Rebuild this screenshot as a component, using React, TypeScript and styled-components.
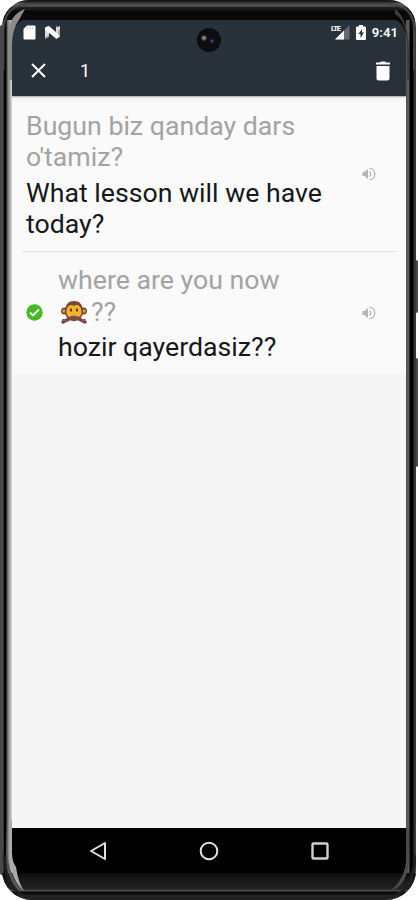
import React from 'react'
import styled, { createGlobalStyle } from 'styled-components'

const GlobalStyle = createGlobalStyle`
  body {
    margin: 0;
    background-color: white;
  }
`

const Stage = styled.div`
  position: relative;
  width: 418px;
  height: 900px;
  overflow: hidden;
  background-color: white;
  font-family: Roboto, 'Liberation Sans', sans-serif;
`

const SideKey = styled.div<{ $top: number; $height: number; $left?: boolean }>`
  position: absolute;
  top: ${({ $top }) => $top}px;
  height: ${({ $height }) => $height}px;
  ${({ $left }) => ($left ? 'left: 0;' : 'right: 0;')}
  width: 6px;
  border-radius: 2px;
  background-color: #484848;
`

const Body = styled.div`
  position: relative;
  box-sizing: border-box;
  display: flex;
  flex-direction: column;
  height: 900px;
  margin: 0 2px;
  border-radius: 27px 27px 30px 30px;
  overflow: hidden;
  background: linear-gradient(
    to right,
    #555 0,
    #333 1.5px,
    #000 2.5px,
    #050505 4px,
    #555 5px,
    #777 6px,
    #999 7px,
    #aaa 8px,
    #c4c4c4 9px,
    #ddd 10px,
    #555 11px,
    #555 404px,
    #5c5c5c 407px,
    #000 408px,
    #000 411px,
    #333 412px,
    #3c3c3c 414px
  );
`
const TopRim = styled.div`
  flex: none;
  height: 20px;
  background: linear-gradient(#111 0, #222 2px, #666 4px, #555 6px, #111 8px, #222 9px, #080808 11px, #0b0b0b 20px);
`
const BottomRim = styled.div`
  flex: none;
  height: 27px;
  background: linear-gradient(#0c0c0c 0, #191919 8px, #222 16px, #555 18px, #000 19px, #111 21px, #333 24px, #222 27px);
`
const Glare = styled.svg`
  position: absolute;
  left: 0;
  top: 0;
  pointer-events: none;
`

const Screen = styled.div`
  flex: 1;
  display: flex;
  flex-direction: column;
  margin: 0 10px;
  background-color: #f5f5f5;
`

const StatusBar = styled.div`
  display: flex;
  align-items: center;
  height: 25px;
  padding: 0 8px 0 11px;
  background-color: #28323b;
  color: white;
`
const StatusGroup = styled.div`
  display: flex;
  align-items: center;
  gap: 9px;
  flex: 1;
`
const StatusGap = styled.div`
  width: 6px;
`
const Clock = styled.div`
  margin-left: 6px;
  font-size: 13.2px;
  font-weight: 600;
  line-height: 15px;
`
const Camera = styled.div`
  position: absolute;
  left: 195px;
  top: 28px;
  width: 24px;
  height: 24px;
  border-radius: 50%;
  background: radial-gradient(circle at 7px 10px, #bbb 0, #666 1.5px, transparent 3.5px),
    radial-gradient(circle at 15px 13px, #55679c 0, #20264b 1.5px, transparent 3px), #0b0d0e;
`

const ActionBar = styled.div`
  display: flex;
  align-items: center;
  height: 51px;
  padding: 0 15px 0 18px;
  background-color: #28303a;
  color: white;
`
const Count = styled.div`
  flex: 1;
  margin-left: 33px;
  font-size: 18px;
`

const List = styled.div`
  display: flex;
  flex-direction: column;
  height: 278px;
  background: linear-gradient(#98999b 0, #d8d8d8 1px, #f2f2f2 2px, #fafafa 5px);
`
const Entry = styled.div<{ $height: number }>`
  display: flex;
  align-items: center;
  box-sizing: border-box;
  height: ${({ $height }) => $height}px;
  padding: 0 30px 0 14px;
`
const Check = styled.div`
  display: flex;
  width: 32px;
`
const Phrases = styled.div`
  flex: 1;
  padding-top: 4px;
  white-space: nowrap;
`
const Phrase = styled.div<{ $muted?: boolean }>`
  margin-bottom: ${({ $muted }) => ($muted ? 4 : 0)}px;
  font-size: 26.7px;
  line-height: 31.5px;
  color: ${({ $muted }) => ($muted ? '#a3a3a3' : '#16181b')};
`
const Line = styled.div`
  display: flex;
  align-items: center;
  height: 31.5px;
`
const Divider = styled.div`
  height: 1px;
  margin: 0 10px;
  background-color: #e0e0e0;
`

const NavBar = styled.div`
  display: flex;
  align-items: center;
  justify-content: space-between;
  height: 45px;
  margin-top: auto;
  padding: 0 77px;
  background-color: black;
`

const SdCard = () => (
  <svg width="13" height="15" viewBox="0 0 13 15">
    <path d="M4 0.5h7.5a1 1 0 0 1 1 1v12a1 1 0 0 1-1 1h-10a1 1 0 0 1-1-1V4z" fill="#fff" />
    <path d="M4.5 2v2M7 2v2M9.5 2v2" stroke="#ccc" />
  </svg>
)

const Nougat = () => (
  <svg width="15" height="13" viewBox="0 0 15 13">
    <path d="M0 3l4 3v5l-4 2zM11 0l4 2v8l-4 2z" fill="#aaa" />
    <path d="M0 2.5L4 0l7 6V2l4-2v3l-2 1v6l-2 1-7-6v4l-4 2z" fill="#ddd" />
    <path d="M0 1.5L3.5 0 15 10.5 11.5 13 0 3.5z" fill="#fff" />
  </svg>
)

const SignalText = styled.text`
  font-size: 7.5px;
  font-weight: 700;
  fill: white;
`
const Signal = () => (
  <svg width="19" height="15" viewBox="0 0 19 15">
    <path d="M18.5 0v14.5H4z" fill="#626b72" />
    <path d="M13 5.5v9H4z" fill="#fff" />
    <SignalText x="0" y="6" textLength="10">LTE</SignalText>
  </svg>
)

const Battery = () => (
  <svg width="10" height="15" viewBox="0 0 10 15">
    <path d="M3 0h4v1.5h2a1 1 0 0 1 1 1V14a1 1 0 0 1-1 1H1a1 1 0 0 1-1-1V2.5a1 1 0 0 1 1-1h2z" fill="#fff" />
    <path d="M6 4L2.5 9h2v4L8 7.5H6z" fill="#28323b" />
  </svg>
)

const Close = () => (
  <svg width="17" height="17" viewBox="0 0 17 17">
    <path d="M2 2l13 13M15 2L2 15" stroke="#fff" strokeWidth="2" />
  </svg>
)

const Trash = () => (
  <svg width="16" height="20" viewBox="0 0 16 20">
    <path d="M1 1.5h4l1-1h4l1 1h4v2H1zM1.5 5h13v12.5a2 2 0 0 1-2 2h-9a2 2 0 0 1-2-2z" fill="#fff" />
  </svg>
)

const Speaker = () => (
  <svg width="14" height="14" viewBox="0 0 14 14" fill="none" stroke="#b5b5b5">
    <path d="M0.5 5h2L6 2v10L2.5 9h-2z" fill="#b5b5b5" stroke="none" />
    <path d="M7.5 4.5q2.5 2.5 0 5" strokeWidth="1.2" />
    <path d="M7.5 1.4c7 0 7 11.2 0 11.2" strokeWidth="1.3" />
  </svg>
)

const CheckIcon = () => (
  <svg width="17" height="17" viewBox="0 0 17 17">
    <circle cx="8.5" cy="8.5" r="8.2" fill="#45b927" />
    <path d="M4 8.5l3 3 6-6" fill="none" stroke="#fff" strokeWidth="1.8" />
  </svg>
)

const Monkey = () => (
  <svg width="33" height="25" viewBox="0 0 33 25">
    <circle cx="6.5" cy="11" r="3.5" fill="#74453f" />
    <circle cx="25.5" cy="11" r="3.5" fill="#74453f" />
    <circle cx="6" cy="11" r="1.7" fill="#e9a12b" />
    <circle cx="26" cy="11" r="1.7" fill="#e9a12b" />
    <path d="M7 12C7 4 11 1 16 1s9 3 9 11c0 5-4 8-9 8s-9-3-9-8z" fill="#74453f" />
    <path d="M8.5 12c0-7 5-8 7.5-6 2.5-2 7.5-1 7.5 6 0 4-3 6-7.5 6s-7.500-2-7.500-6z" fill="#f8b32b" />
    <ellipse cx="13" cy="10" rx="1.1" ry="1.8" fill="#49352c" />
    <ellipse cx="19" cy="10" rx="1.1" ry="1.8" fill="#49352c" />
    <path d="M5 22l8-4M27 22l-8-4" stroke="#74453f" strokeWidth="3.4" strokeLinecap="round" />
    <path d="M11 18q5-5 10 0v1.5q-5 3.500-10 0z" fill="#804c46" />
    <path d="M5 19.5l3 1.500M27 19.5l-3 1.500" stroke="#945956" strokeWidth="1.6" strokeLinecap="round" />
  </svg>
)

const App = () => (
  <>
    <GlobalStyle />
    <Stage>
      <SideKey $left $top={25} $height={850} />
      <SideKey $top={260} $height={53} />
      <SideKey $top={358} $height={109} />
      <Body>
        <TopRim />
        <Screen>
          <StatusBar>
            <StatusGroup>
              <SdCard />
              <Nougat />
            </StatusGroup>
            <Signal />
            <StatusGap />
            <Battery />
            <Clock>9:41</Clock>
          </StatusBar>
          <ActionBar>
            <Close />
            <Count>1</Count>
            <Trash />
          </ActionBar>
          <List>
            <Entry $height={155}>
              <Phrases>
                <Phrase $muted>
                  Bugun biz qanday dars
                  <br />
                  o'tamiz?
                </Phrase>
                <Phrase>
                  What lesson will we have
                  <br />
                  today?
                </Phrase>
              </Phrases>
              <Speaker />
            </Entry>
            <Divider />
            <Entry $height={121}>
              <Check>
                <CheckIcon />
              </Check>
              <Phrases>
                <Phrase $muted>
                  where are you now
                  <Line>
                    <Monkey />
                    ??
                  </Line>
                </Phrase>
                <Phrase>hozir qayerdasiz??</Phrase>
              </Phrases>
              <Speaker />
            </Entry>
          </List>
          <NavBar>
            <svg width="18" height="20" viewBox="0 0 18 20">
              <path d="M16 2v16L2 10z" fill="none" stroke="#e0e0e0" strokeWidth="2" strokeLinejoin="round" />
            </svg>
            <svg width="20" height="20" viewBox="0 0 20 20">
              <circle cx="10" cy="10" r="8.3" fill="none" stroke="#e0e0e0" strokeWidth="2" />
            </svg>
            <svg width="18" height="18" viewBox="0 0 18 18">
              <rect x="1.5" y="1.5" width="15" height="15" rx="1" fill="none" stroke="#d0d0d0" strokeWidth="2.4" />
            </svg>
          </NavBar>
        </Screen>
        <BottomRim />
        <Camera />
        <Glare width="414" height="900" viewBox="0 0 414 900">
          <path d="M10 34V18h18q-13 1-18 16zM404 34V18h-18q14 1 18 16z" fill="#090909" />
          <path d="M1.5 70V30Q2 4 29 4H385Q412 4 412 30V70" fill="none" stroke="#444" strokeWidth="2" />
          <path d="M6 80V34Q8 14 23 9L17 20Q10 29 10 46V80z" fill="#8a8a8a" />
          <path d="M393 9Q406 18 407 50V80h-2V45Q405 21 393 14z" fill="#3d3d3d" />
          <path d="M5 820v30q2 29 17 41H17Q4 880 4 850z" fill="#555" />
          <path d="M7 820v39q3 22 15 32-6-9-8-24-4-5-4-15v-32z" fill="#aaa" />
          <path d="M404 828v32q-1 19-16 31 19-5 19-36v-27z" fill="#4b4b4b" />
          <path d="M2 855Q4 896 31 898H383Q412 896 413 855" fill="none" stroke="#202020" strokeWidth="3" />
        </Glare>
      </Body>
    </Stage>
  </>
)

export default App
